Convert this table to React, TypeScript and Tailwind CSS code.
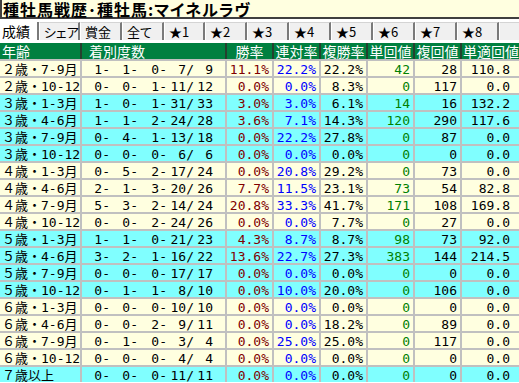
const mono = "font-['DejaVu_Sans_Mono','Noto_Sans_CJK_JP',monospace]";

type Row = {
  age: string;
  c: [string, string, string, string, string];
  win: string;
  ren: string;
  fuku: string;
  tan: string;
  fk: string;
  teki: string;
  cyan: boolean;
};

const rows: Row[] = [
  { age: "２歳・7-9月", c: ["1-", "1-", "0-", "7/", "9"], win: "11.1%", ren: "22.2%", fuku: "22.2%", tan: "42", fk: "28", teki: "110.8", cyan: false },
  { age: "２歳・10-12", c: ["0-", "0-", "1-", "11/", "12"], win: "0.0%", ren: "0.0%", fuku: "8.3%", tan: "0", fk: "117", teki: "0.0", cyan: false },
  { age: "３歳・1-3月", c: ["1-", "0-", "1-", "31/", "33"], win: "3.0%", ren: "3.0%", fuku: "6.1%", tan: "14", fk: "16", teki: "132.2", cyan: true },
  { age: "３歳・4-6月", c: ["1-", "1-", "2-", "24/", "28"], win: "3.6%", ren: "7.1%", fuku: "14.3%", tan: "120", fk: "290", teki: "117.6", cyan: true },
  { age: "３歳・7-9月", c: ["0-", "4-", "1-", "13/", "18"], win: "0.0%", ren: "22.2%", fuku: "27.8%", tan: "0", fk: "87", teki: "0.0", cyan: true },
  { age: "３歳・10-12", c: ["0-", "0-", "0-", "6/", "6"], win: "0.0%", ren: "0.0%", fuku: "0.0%", tan: "0", fk: "0", teki: "0.0", cyan: true },
  { age: "４歳・1-3月", c: ["0-", "5-", "2-", "17/", "24"], win: "0.0%", ren: "20.8%", fuku: "29.2%", tan: "0", fk: "73", teki: "0.0", cyan: false },
  { age: "４歳・4-6月", c: ["2-", "1-", "3-", "20/", "26"], win: "7.7%", ren: "11.5%", fuku: "23.1%", tan: "73", fk: "54", teki: "82.8", cyan: false },
  { age: "４歳・7-9月", c: ["5-", "3-", "2-", "14/", "24"], win: "20.8%", ren: "33.3%", fuku: "41.7%", tan: "171", fk: "108", teki: "169.8", cyan: false },
  { age: "４歳・10-12", c: ["0-", "0-", "2-", "24/", "26"], win: "0.0%", ren: "0.0%", fuku: "7.7%", tan: "0", fk: "27", teki: "0.0", cyan: false },
  { age: "５歳・1-3月", c: ["1-", "1-", "0-", "21/", "23"], win: "4.3%", ren: "8.7%", fuku: "8.7%", tan: "98", fk: "73", teki: "92.0", cyan: true },
  { age: "５歳・4-6月", c: ["3-", "2-", "1-", "16/", "22"], win: "13.6%", ren: "22.7%", fuku: "27.3%", tan: "383", fk: "144", teki: "214.5", cyan: true },
  { age: "５歳・7-9月", c: ["0-", "0-", "0-", "17/", "17"], win: "0.0%", ren: "0.0%", fuku: "0.0%", tan: "0", fk: "0", teki: "0.0", cyan: true },
  { age: "５歳・10-12", c: ["0-", "1-", "1-", "8/", "10"], win: "0.0%", ren: "10.0%", fuku: "20.0%", tan: "0", fk: "106", teki: "0.0", cyan: true },
  { age: "６歳・1-3月", c: ["0-", "0-", "0-", "10/", "10"], win: "0.0%", ren: "0.0%", fuku: "0.0%", tan: "0", fk: "0", teki: "0.0", cyan: false },
  { age: "６歳・4-6月", c: ["0-", "0-", "2-", "9/", "11"], win: "0.0%", ren: "0.0%", fuku: "18.2%", tan: "0", fk: "89", teki: "0.0", cyan: false },
  { age: "６歳・7-9月", c: ["0-", "1-", "0-", "3/", "4"], win: "0.0%", ren: "25.0%", fuku: "25.0%", tan: "0", fk: "117", teki: "0.0", cyan: false },
  { age: "６歳・10-12", c: ["0-", "0-", "0-", "4/", "4"], win: "0.0%", ren: "0.0%", fuku: "0.0%", tan: "0", fk: "0", teki: "0.0", cyan: false },
  { age: "７歳以上", c: ["0-", "0-", "0-", "11/", "11"], win: "0.0%", ren: "0.0%", fuku: "0.0%", tan: "0", fk: "0", teki: "0.0", cyan: true },
];

const tabs = ["シェア", "賞金", "全て", "★1", "★2", "★3", "★4", "★5", "★6", "★7", "★8"];
const tabWidths = ["w-[41px]", "w-[42px]", "w-[42px]", "w-[41px]", "w-[42px]", "w-[42px]", "w-[42px]", "w-[42px]", "w-[42px]", "w-[42px]", "w-[42px]"];
const countWidths = ["w-[28px]", "w-[28px]", "w-[29px]", "w-[27px]", "w-[19px]"];

const cols = "grid grid-cols-[80px_143px_45px_45px_45px_45px_45px_1fr] gap-x-[2px]";

function Num({ v, color, last }: { v: string; color: string; last?: boolean }) {
  return (
    <div className={`h-full flex items-end justify-end whitespace-nowrap ${last ? "pr-[9px]" : "pr-[3px]"} ${color}`}>
      <span className="leading-[13px]">{v}</span>
    </div>
  );
}

export default function App() {
  return (
    <div className="w-[519px] h-[383px] overflow-hidden bg-white text-black">
      <div className="h-[19px] flex items-center bg-[#ffffe0] border-l-2 border-b-2 border-[#404040] pl-[1px]">
        <div className="whitespace-nowrap text-[16px] font-bold leading-[16px] tracking-[1px] font-['Noto_Sans_CJK_JP',sans-serif] [font-feature-settings:'palt']">
          種牡馬戦歴･種牡馬:マイネルラヴ
        </div>
      </div>

      <div className="mt-[3px] h-[18px] flex whitespace-nowrap text-[13px] leading-[15px] font-['Noto_Sans_CJK_JP',sans-serif] [font-feature-settings:'palt']">
        <div className="w-[39px] shrink-0 border-r-2 border-r-[#7a7a7a] pl-[2px] pt-[2px] text-[14px]">成績</div>
        {tabs.map((t, i) => (
          <div
            key={t}
            className={`${tabWidths[i]} shrink-0 bg-[#f0f0f0] border-t border-t-[#d4d4d4] border-l border-l-white border-r-2 border-r-[#7a7a7a] pl-[4px] pt-[1px]`}
          >
            {t}
          </div>
        ))}
        <div className="flex-1 bg-[#f0f0f0] border-t border-t-[#d4d4d4] border-l border-l-white" />
      </div>

      <div className="mt-[3px] flex flex-col gap-y-[2px] bg-[#c0c0c0]">
        <div className={`${cols} bg-[#25402f] h-[16px] whitespace-nowrap text-white text-[14px] leading-[16px] font-['Noto_Sans_CJK_JP',sans-serif]`}>
          <div className="bg-[#008040] pl-[2px]">年齢</div>
          <div className="bg-[#008040] pl-[7px]">着別度数</div>
          <div className="bg-[#008040] text-center">勝率</div>
          <div className="bg-[#008040] text-center">連対率</div>
          <div className="bg-[#008040] text-center">複勝率</div>
          <div className="bg-[#008040] text-center">単回値</div>
          <div className="bg-[#008040] text-center">複回値</div>
          <div className="bg-[#008040] pl-[1px]">単適回値</div>
        </div>

        {rows.map((r) => {
          const bg = r.cyan ? "bg-[#80ffff]" : "bg-[#ffffe0]";
          return (
            <div key={r.age} className={`${cols} h-[15px] whitespace-nowrap text-[13px] ${mono}`}>
              <div className={`${bg} flex items-end pl-[2px]`}>
                <span className="leading-[13px]">{r.age}</span>
              </div>
              <div className={`${bg} flex items-end`}>
                {r.c.map((p, i) => (
                  <span key={i} className={`${countWidths[i]} shrink-0 text-right leading-[13px]`}>
                    {p}
                  </span>
                ))}
              </div>
              <div className={bg}><Num v={r.win} color="text-[#800000]" /></div>
              <div className={bg}><Num v={r.ren} color="text-[#0000ff]" /></div>
              <div className={bg}><Num v={r.fuku} color="text-black" /></div>
              <div className={bg}><Num v={r.tan} color="text-[#008000]" /></div>
              <div className={bg}><Num v={r.fk} color="text-black" /></div>
              <div className={bg}><Num v={r.teki} color="text-black" last /></div>
            </div>
          );
        })}
      </div>
    </div>
  );
}
